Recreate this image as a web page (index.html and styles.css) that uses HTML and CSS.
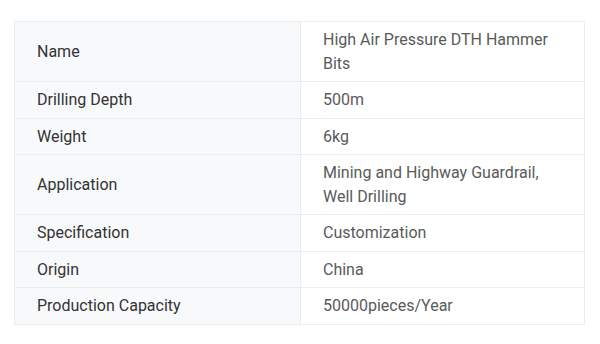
FILE: index.html
```html
<!DOCTYPE html>
<html>
<head>
<meta charset="utf-8">
<link rel="stylesheet" href="styles.css">
</head>
<body>
<div class="wrap">
<table class="spec">
<tr><td class="k">Name</td><td class="v">High Air Pressure DTH Hammer Bits</td></tr>
<tr><td class="k">Drilling Depth</td><td class="v">500m</td></tr>
<tr><td class="k">Weight</td><td class="v">6kg</td></tr>
<tr><td class="k">Application</td><td class="v">Mining and Highway Guardrail, Well Drilling</td></tr>
<tr><td class="k">Specification</td><td class="v">Customization</td></tr>
<tr><td class="k">Origin</td><td class="v">China</td></tr>
<tr><td class="k">Production Capacity</td><td class="v">50000pieces/Year</td></tr>
</table>
</div>
</body>
</html>
```
FILE: styles.css
```css
html, body {
  margin: 0;
  padding: 0;
  background: #fff;
}
.wrap {
  padding: 21px 15px 0 14px;
}
.spec {
  width: 571px;
  border-collapse: collapse;
  font-family: Roboto, "Liberation Sans", sans-serif;
  font-size: 16px;
  line-height: 23.5px;
}
.spec td {
  border: 1px solid #e9ecf1;
  padding: 6px 22px;
  vertical-align: middle;
}
.spec .k {
  width: 241px;
  background: #f8f9fb;
  color: #333;
}
.spec .v {
  background: #fff;
  color: #5a5a5a;
}
```
